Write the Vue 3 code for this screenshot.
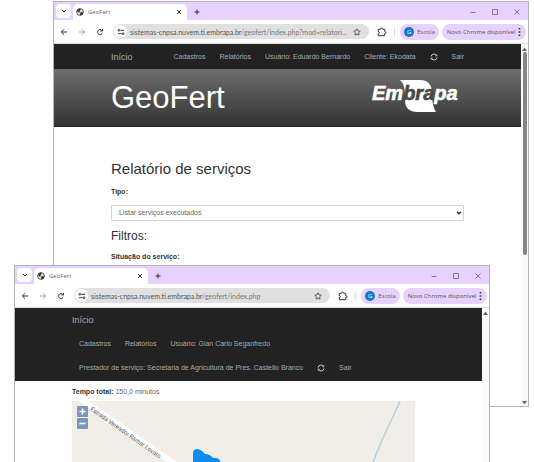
<script setup>
import { ref } from 'vue'

const windows = [
  {
    id: 'report',
    host: 'sistemas-cnpsa.nuvem.ti.embrapa.br',
    path: '/geofert/index.php?mod=relatori...',
  },
  {
    id: 'map',
    host: 'sistemas-cnpsa.nuvem.ti.embrapa.br',
    path: '/geofert/index.php',
  },
]
const reportType = ref('executados')
</script>

<template>
  <main class="desktop">
    <section v-for="win in windows" :key="win.id" class="window" :class="win.id">
      <header class="tabstrip">
        <button class="tab-search" aria-label="Pesquisar guias">
          <svg width="6" height="4" viewBox="0 0 6 4"><path d="M1 1l2 2 2-2" class="line" /></svg>
        </button>
        <div class="tab">
          <svg class="favicon" width="8" height="8" viewBox="0 0 8 8">
            <circle cx="4" cy="4" r="3.4" fill="#e8e8e8" stroke="#333" stroke-width=".8" />
            <path d="M.8 3.2L2 1.2 4 .6 4.6 2 3.6 3.2 3.7 4.4 2.3 4.5 1.5 3.6zM4.3 4.6L6 4l1.3.6-.9 1.8L4.5 7.4 4 6z" fill="#333" />
          </svg>
          <span class="tab-title">GeoFert</span>
          <button class="bare" aria-label="Fechar guia">
            <svg width="6" height="6" viewBox="0 0 6 6"><path d="M1 1l4 4M5 1L1 5" class="line" /></svg>
          </button>
        </div>
        <button class="bare new-tab" aria-label="Nova guia">
          <svg width="6" height="6" viewBox="0 0 6 6"><path d="M3 .5v5M.5 3h5" class="line" /></svg>
        </button>
        <div class="controls">
          <button class="bare" aria-label="Minimizar">
            <svg width="6" height="6" viewBox="0 0 6 6"><path d="M.5 3.5h5" class="thin" /></svg>
          </button>
          <button class="bare" aria-label="Maximizar">
            <svg width="6" height="6" viewBox="0 0 6 6"><path d="M.5.5h5v5h-5z" class="thin" /></svg>
          </button>
          <button class="bare" aria-label="Fechar">
            <svg width="6" height="6" viewBox="0 0 6 6"><path d="M.5.5l5 5M5.5.5l-5 5" class="thin" /></svg>
          </button>
        </div>
      </header>

      <div class="toolbar">
        <div class="history">
          <button class="bare" aria-label="Voltar">
            <svg width="8" height="8" viewBox="0 0 8 8"><path d="M7 4H1.5M4 1.3L1.3 4 4 6.7" class="line" /></svg>
          </button>
          <button class="bare faded" aria-label="Avançar">
            <svg width="8" height="8" viewBox="0 0 8 8"><path d="M1 4h5.5M4 1.3L6.7 4 4 6.7" class="line" /></svg>
          </button>
          <button class="bare" aria-label="Recarregar">
            <svg width="8" height="8" viewBox="0 0 8 8"><path d="M6.3 5.2A2.5 2.5 0 1 1 6 2.5M6.5 .9v2.1H4.3" class="line" /></svg>
          </button>
        </div>
        <div class="address">
          <button class="site-info" aria-label="Informações do site">
            <svg width="8" height="8" viewBox="0 0 8 8">
              <path d="M3.5 2.3H7M1 5.7h3.5" class="line" />
              <circle cx="1.9" cy="2.3" r=".9" class="line" /><circle cx="6.1" cy="5.7" r=".9" class="line" />
            </svg>
          </button>
          <span class="url"><span class="host">{{ win.host }}</span>{{ win.path }}</span>
          <button class="bare" aria-label="Favoritar">
            <svg width="8" height="8" viewBox="0 0 8 8"><path d="M4 .8l1 2.1 2.3.3-1.7 1.6.4 2.3L4 6 2 7.1l.4-2.3L.7 3.2 3 2.9z" fill="none" stroke="#444" stroke-width=".8" /></svg>
          </button>
        </div>
        <button class="bare extensions" aria-label="Extensões">
          <svg width="10" height="10" viewBox="0 0 10 10"><path d="M1.2 2.3h2.3C3.5.6 5.7.6 5.7 2.3h2v2.2c1.7 0 1.7 2 0 2v2.2H1.2V6.6c1.5 0 1.5-2.2 0-2.2z" class="line" /></svg>
        </button>
        <button class="pill profile"><span class="avatar">G</span>Escola</button>
        <button class="pill update">
          Novo Chrome disponível
          <svg width="3" height="10" viewBox="0 0 3 10"><path d="M.7 1h1.6v1.6H.7zM.7 4.2h1.6v1.6H.7zM.7 7.4h1.6V9H.7z" fill="#333" /></svg>
        </button>
      </div>

      <div class="viewport">
        <div v-if="win.id === 'report'" class="page">
          <nav class="navbar single">
            <a href="#" class="brand">Início</a>
            <div class="links">
              <a href="#">Cadastros</a>
              <a href="#">Relatórios</a>
              <a href="#">Usuário: Eduardo Bernardo</a>
              <a href="#">Cliente: Ekodata</a>
              <a href="#" class="refresh" aria-label="Atualizar">
                <svg width="8" height="8" viewBox="0 0 8 8"><path d="M1 3.6A3 3 0 0 1 6.5 2.4M7 4.4A3 3 0 0 1 1.5 5.6" fill="none" stroke="currentColor" stroke-width="1" /><path d="M7.2.9v2.4H4.9zM.8 7.1V4.7h2.3z" fill="currentColor" /></svg>
              </a>
              <a href="#">Sair</a>
            </div>
          </nav>
          <div class="banner">
            <span class="product">GeoFert</span>
            <svg class="logo" width="88" height="38" viewBox="0 0 88 38" role="img" aria-label="Embrapa">
              <path d="M29 1H49C58 1 61 7 61 14C61 22 62 28 65 33H47C38 33 34 29 34 21C34 12 34 5 29 1z" fill="#fff" />
              <text y="21" class="logo-text"><tspan x="1" class="light">Em</tspan><tspan class="dark">bra</tspan><tspan class="light">pa</tspan></text>
            </svg>
          </div>
          <form class="report-form">
            <h1>Relatório de serviços</h1>
            <label for="tipo">Tipo:</label>
            <div class="select-box">
              <select id="tipo" v-model="reportType">
                <option value="executados">Listar serviços executados</option>
              </select>
              <svg width="6" height="4" viewBox="0 0 6 4"><path d="M1 .8l2 2 2-2" class="line heavy" /></svg>
            </div>
            <h2>Filtros:</h2>
            <strong>Situação do serviço:</strong>
          </form>
        </div>

        <div v-else class="page">
          <nav class="navbar stacked">
            <a href="#" class="brand">Início</a>
            <div class="links">
              <a href="#">Cadastros</a>
              <a href="#">Relatórios</a>
              <a href="#">Usuário: Gian Carlo Seganfredo</a>
            </div>
            <div class="links">
              <a href="#">Prestador de serviço: Secretaria de Agricultura de Pres. Castello Branco</a>
              <a href="#" class="refresh" aria-label="Atualizar">
                <svg width="8" height="8" viewBox="0 0 8 8"><path d="M1 3.6A3 3 0 0 1 6.5 2.4M7 4.4A3 3 0 0 1 1.5 5.6" fill="none" stroke="currentColor" stroke-width="1" /><path d="M7.2.9v2.4H4.9zM.8 7.1V4.7h2.3z" fill="currentColor" /></svg>
              </a>
              <a href="#">Sair</a>
            </div>
          </nav>
          <div class="result">
            <p><strong>Tempo total:</strong> 150,0 minutos</p>
            <div class="map">
              <svg class="terrain" viewBox="0 0 343 62" preserveAspectRatio="xMinYMin slice">
                <path d="M6 -4L110 68" stroke="#fff" stroke-width="6" />
                <path d="M328 0C322 15 306 45 301 62" fill="none" stroke="#b3d5dc" stroke-width="1.6" />
                <path d="M121 64V52Q121 48 126 48Q130 49 133 53Q138 53 141 57Q147 56 149 62V64z" fill="#0c8cf5" />
                <text x="18" y="9" transform="rotate(35 18 9)" class="road-name">Estrada Vereador Ramar Lovato</text>
              </svg>
              <div class="zoom">
                <button aria-label="Aproximar"><svg width="7" height="7" viewBox="0 0 7 7"><path d="M3.5 .5v6M.5 3.5h6" stroke="#fff" stroke-width="1.6" /></svg></button>
                <button aria-label="Afastar"><svg width="7" height="7" viewBox="0 0 7 7"><path d="M.5 3.5h6" stroke="#fff" stroke-width="1.6" /></svg></button>
              </div>
            </div>
          </div>
        </div>

        <div class="scrollbar">
          <svg width="5" height="4" viewBox="0 0 5 4"><path d="M2.5 .5L5 4H0z" fill="#666" /></svg>
          <div class="thumb"></div>
          <svg width="5" height="4" viewBox="0 0 5 4"><path d="M0 0h5L2.5 3.5z" fill="#666" /></svg>
        </div>
      </div>
    </section>
  </main>
</template>

<style>
body {
  margin: 0;
  background: #fff;
}
</style>

<style scoped>
* {
  box-sizing: border-box;
}
.desktop {
  position: relative;
  height: 100vh;
  overflow: hidden;
  font: 7px/10px "Liberation Sans", Arial, sans-serif;
  color: #333;
}
button {
  font: inherit;
  color: inherit;
  border: 0;
  padding: 0;
  display: flex;
  align-items: center;
  justify-content: center;
}
svg {
  display: block;
  flex: none;
}
.line {
  fill: none;
  stroke: #333;
  stroke-width: 1;
}
.heavy {
  stroke-width: 1.5;
}
.thin {
  fill: none;
  stroke: #666;
  stroke-width: 0.8;
}
.bare {
  background: none;
}
.faded {
  opacity: 0.45;
}

/* Browser windows */
.window {
  position: absolute;
  display: flex;
  flex-direction: column;
  background: #fff;
  border: 1px solid #b5b3b9;
}
.report {
  left: 53px;
  right: 5px;
  top: 1px;
  bottom: 55px;
}
.map.window {
  left: 14px;
  right: 44px;
  top: 265px;
  bottom: -40px;
}
.tabstrip {
  flex: none;
  display: flex;
  height: 18px;
  padding: 2px 8px 0 2px;
  background: #e6d2fc;
}
.tab-search {
  width: 15px;
  height: 14px;
  border-radius: 4px;
  background: #fff;
}
.tab {
  display: flex;
  align-items: center;
  gap: 4px;
  width: 114px;
  margin-left: 2px;
  padding: 0 5px 0 3px;
  border-radius: 5px 5px 0 0;
  background: #fff;
}
.tab-title {
  flex: 1;
  font: 6px/10px "Open Sans", sans-serif;
  color: #666;
}
.new-tab {
  margin-left: 7px;
}
.controls {
  display: flex;
  gap: 16px;
  margin-left: auto;
}
.toolbar {
  flex: none;
  display: flex;
  align-items: center;
  height: 24px;
  padding: 0 2px 0 6px;
  border-bottom: 1px solid #ddd;
  font: 6px/10px "Open Sans", sans-serif;
}
.history {
  display: flex;
  gap: 10px;
}
.address {
  flex: 1;
  display: flex;
  align-items: center;
  min-width: 0;
  height: 15px;
  margin-left: 9px;
  padding: 0 8px 0 1px;
  border-radius: 8px;
  background: #e0e0e0;
}
.site-info {
  flex: none;
  width: 13px;
  height: 13px;
  border-radius: 50%;
  background: #fff;
}
.url {
  flex: 1;
  overflow: hidden;
  white-space: nowrap;
  margin-left: 3px;
  font: 7px/10px Lato, sans-serif;
  color: #777;
}
.host {
  color: #555;
}
.extensions {
  width: 26px;
  height: 8px;
  border-right: 1px solid #e6d2fc;
}
.pill {
  flex: none;
  height: 16px;
  border-radius: 8px;
  background: #e6d2fc;
  color: #555;
}
.profile {
  gap: 3px;
  width: 39px;
  margin-left: 5px;
}
.avatar {
  width: 10px;
  border-radius: 50%;
  background: #1479c4;
  color: #fff;
}
.update {
  gap: 3px;
  width: 84px;
  margin-left: 3px;
}
.viewport {
  flex: 1;
  display: flex;
  min-height: 0;
}
.page {
  flex: 1;
  min-width: 0;
  overflow: hidden;
}
.scrollbar {
  display: flex;
  flex-direction: column;
  align-items: center;
  width: 7px;
  padding: 3px 0 1px;
  background: #fafafa;
}
.thumb {
  width: 4px;
  height: 203px;
  margin: 1px 0 auto;
  border-radius: 2px;
  background: #858585;
}
.map .thumb {
  background: none;
}

/* Site navigation */
.navbar {
  background: #222;
  color: #aaa;
}
.navbar a {
  color: inherit;
  text-decoration: none;
  white-space: nowrap;
}
.navbar .brand {
  font-size: 9px;
}
.links {
  display: flex;
  align-items: center;
  gap: 14px;
}
.navbar .refresh {
  color: #ccc;
}
.single {
  display: flex;
  align-items: center;
  justify-content: space-between;
  height: 25px;
  padding: 0 57px;
}
.stacked {
  padding: 0 57px 1px;
}
.stacked .brand {
  display: block;
  line-height: 24px;
}
.stacked .links {
  height: 24px;
  padding-left: 7px;
}

/* Report page */
.banner {
  display: flex;
  align-items: center;
  justify-content: space-between;
  height: 58px;
  padding: 0 62px 0 57px;
  background: linear-gradient(#6d6d6d, #343434);
  border-bottom: 1px solid #222;
}
.product {
  font-size: 31px;
  line-height: 36px;
  color: #fff;
}
.logo-text {
  font: italic bold 20px "Liberation Sans", Arial, sans-serif;
  stroke-width: 0.6;
}
.light {
  fill: #fff;
  stroke: #fff;
}
.dark {
  fill: #484848;
  stroke: #484848;
}
.report-form {
  display: flex;
  flex-direction: column;
  padding: 32px 57px 0;
}
h1,
h2 {
  margin: 0;
  font-weight: 400;
}
h1 {
  font-size: 15px;
  line-height: 20px;
}
label {
  margin: 8px 0;
  font-weight: 700;
}
.select-box {
  display: grid;
  grid-template-columns: 1fr 8px;
  align-items: center;
}
.select-box select {
  grid-area: 1 / 1 / 2 / 3;
  appearance: none;
  height: 16px;
  padding: 0 7px;
  border: 1px solid #d4d4d4;
  border-radius: 1px;
  background: #fff;
  font: inherit;
  color: #666;
}
.select-box svg {
  grid-area: 1 / 2;
}
h2 {
  margin: 7px 0 8px;
  font-size: 12px;
  line-height: 16px;
}

/* Map page */
.result {
  padding: 6px 67px 0 57px;
}
.result p {
  margin: 0 0 4px;
  color: #666;
}
.result strong {
  color: #333;
}
div.map {
  display: grid;
  height: 100px;
  background: #f1eee8;
}
.terrain {
  grid-area: 1 / 1;
  width: 100%;
  height: 62px;
}
.road-name {
  font: 6px Roboto, sans-serif;
  fill: #555;
}
.zoom {
  grid-area: 1 / 1;
  display: grid;
  gap: 1px;
  align-self: start;
  justify-self: start;
  padding: 5px;
}
.zoom button {
  width: 11px;
  height: 11px;
  border-radius: 1px;
  background: #7b98bc;
}
</style>
